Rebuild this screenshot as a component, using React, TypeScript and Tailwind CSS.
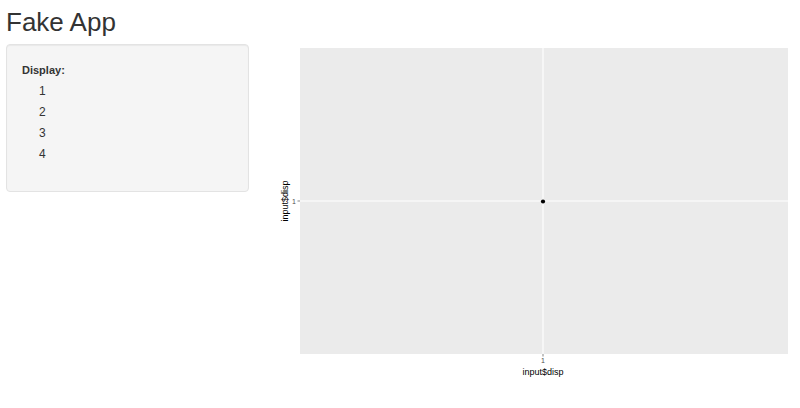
export default function App() {
  return (
    <div className="w-[800px] h-[408px] bg-white px-[6px] font-['Liberation_Sans',Arial,sans-serif] text-[#333333]">
      <h2 className="pt-[8px] text-[26px] leading-[1.1] font-normal">Fake App</h2>
      <div className="mt-[7px] flex items-start">
        <div className="w-[243px] h-[148px] shrink-0 rounded-[4px] border border-[#e3e3e3] bg-[#f5f5f5] px-[15px] pt-[17px] shadow-[inset_0_1px_1px_rgba(0,0,0,0.05)]">
          <div className="text-[11px] font-bold leading-[16px]">Display:</div>
          <ul className="mt-[3px] pl-[17px] text-[12px] leading-[21px]">
            <li>1</li>
            <li>2</li>
            <li>3</li>
            <li>4</li>
          </ul>
        </div>
        <svg width="525" height="350" viewBox="0 0 525 350" className="ml-[21px] -mt-[4px] shrink-0">
          <rect x="30" y="8" width="488" height="306" fill="#ebebeb" />
          <line x1="273" y1="8" x2="273" y2="314" stroke="#ffffff" strokeWidth="1.1" />
          <line x1="30" y1="161" x2="518" y2="161" stroke="#ffffff" strokeWidth="1.1" />
          <circle cx="273" cy="161.5" r="2.1" fill="#000000" />
          <line x1="27.5" y1="161" x2="30" y2="161" stroke="#333333" strokeWidth="0.6" />
          <text x="26" y="163.5" textAnchor="end" fontSize="7" fill="#4d4d4d" fontFamily="Liberation Sans, Arial, sans-serif">1</text>
          <line x1="273" y1="314" x2="273" y2="316.5" stroke="#333333" strokeWidth="0.6" />
          <text x="273" y="323" textAnchor="middle" fontSize="7" fill="#4d4d4d" fontFamily="Liberation Sans, Arial, sans-serif">1</text>
          <text x="273" y="335" textAnchor="middle" fontSize="9" fill="#000000" fontFamily="Liberation Sans, Arial, sans-serif">input$disp</text>
          <text x="0" y="0" transform="translate(18 161) rotate(-90)" textAnchor="middle" fontSize="9" fill="#000000" fontFamily="Liberation Sans, Arial, sans-serif">input$disp</text>
        </svg>
      </div>
    </div>
  )
}
